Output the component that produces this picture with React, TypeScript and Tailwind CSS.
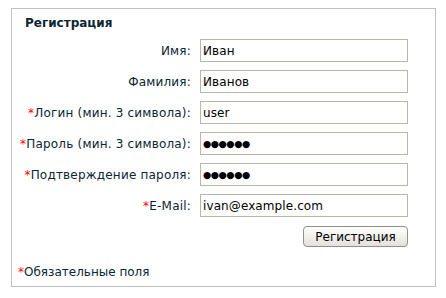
import React from 'react';

const fields = [
  { label: 'Имя:', value: 'Иван', required: false },
  { label: 'Фамилия:', value: 'Иванов', required: false },
  { label: 'Логин (мин. 3 символа):', value: 'user', required: true },
  { label: 'Пароль (мин. 3 символа):', value: '●●●●●●', required: true, secret: true },
  { label: 'Подтверждение пароля:', value: '●●●●●●', required: true, secret: true },
  { label: 'E-Mail:', value: 'ivan@example.com', required: true },
];

const Star = () => <span className="text-[#ff0000]">*</span>;

export default function App() {
  return (
    <div className="w-[446px] h-[298px] bg-white pt-[8px] pl-[11px] font-['DejaVu_Sans',Verdana,sans-serif] text-[#0b2535]">
      <div className="w-[425px] h-[279px] border border-[#c0c0c0] flex flex-col">
        <div className="pl-[13px] pt-[5px] h-[30px] text-[12px] font-bold leading-[18px]">
          Регистрация
        </div>

        <div className="flex flex-col gap-[8px]">
          {fields.map((f) => (
            <div key={f.label} className="flex items-center h-[23px]">
              <label className="w-[179px] text-right text-[12px] tracking-[0.2px] leading-[16px] whitespace-nowrap">
                {f.required && <Star />}
                {f.label}
              </label>
              <input
                readOnly
                value={f.value}
                className={
                  'ml-[9px] w-[208px] h-[23px] border border-[#b9b6ab] px-[2px] outline-none text-black ' +
                  (f.secret ? 'text-[9.5px] tracking-[-0.5px]' : 'text-[12px] tracking-[0.1px]')
                }
              />
            </div>
          ))}
        </div>

        <div className="flex justify-end pr-[27px] mt-[9px]">
          <button className="w-[105px] h-[21px] rounded-[4px] border border-[#8e8f8f] bg-gradient-to-b from-white to-[#e3e1d9] text-[12px] leading-[16px] text-black">
            Регистрация
          </button>
        </div>

        <div className="mt-auto mb-[6px] pl-[6px] text-[12px] leading-[16px]">
          <Star />
          Обязательные поля
        </div>
      </div>
    </div>
  );
}
